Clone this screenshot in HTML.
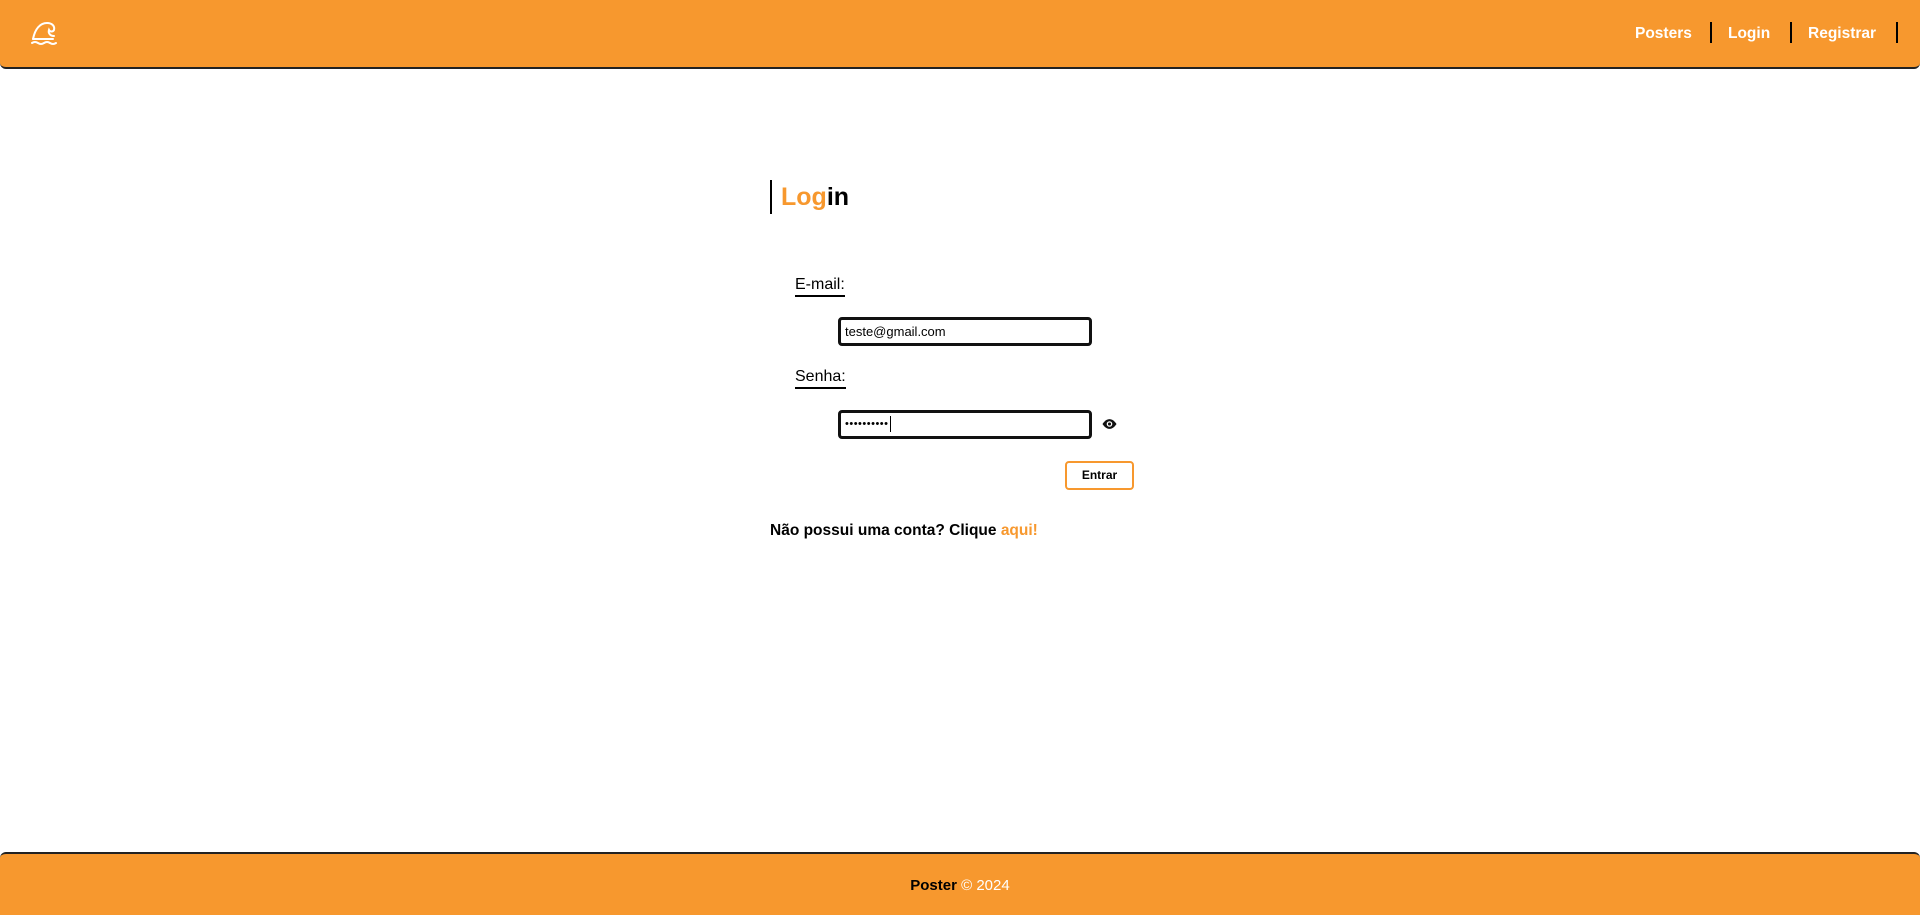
<!DOCTYPE html>
<html><head><meta charset="utf-8"><style>
*{box-sizing:border-box;margin:0;padding:0}
body{width:1920px;height:915px;position:relative;background:#fff;font-family:"Liberation Sans",Arial,sans-serif;overflow:hidden}
.hdr{position:absolute;left:0;top:0;width:1920px;height:69px;background:#f7982e;border-bottom:2px solid #222;border-radius:0 0 6px 6px}
.nav{position:absolute;top:25px;font-weight:bold;color:#fff;font-size:15.5px}
.sep{position:absolute;top:22px;width:2px;height:21px;background:#000}
.abs{position:absolute}
.ftr{position:absolute;left:0;top:852px;width:1920px;height:63px;background:#f7982e;border-top:2px solid #222;border-radius:6px 6px 0 0;text-align:center;color:#fff;font-size:15px;line-height:64px}
.lbl{position:absolute;font-size:16px;color:#000;border-bottom:2px solid #000;line-height:20px}
.inp{position:absolute;left:838px;width:254px;height:29px;border:3px solid #111;border-radius:4px;font-size:13px;line-height:23px;padding-left:4px}
</style></head><body>
<div class="hdr">
<svg class="abs" style="left:31px;top:19px" width="28" height="28" viewBox="0 0 28 28" fill="none" stroke="#fff" stroke-width="2" stroke-linecap="round">
<path d="M2 20 C4 10 9 4 16 4 C21 4 24 7 23 11 C22 13 19 13 18 11 C17 14 19 17 23 17"/>
<path d="M2 20 H22"/>
<path d="M1 24 q3 -2 6 0 t6 0 t6 0 t6 0"/>
</svg>
<div class="nav" style="left:1635px">Posters</div>
<div class="sep" style="left:1710px"></div>
<div class="nav" style="left:1728px">Login</div>
<div class="sep" style="left:1790px"></div>
<div class="nav" style="left:1808px">Registrar</div>
<div class="sep" style="left:1896px"></div>
</div>
<div class="abs" style="left:770px;top:180px;width:2px;height:34px;background:#000"></div>
<div class="abs" style="left:781px;top:183px;font-size:25px;font-weight:bold"><span style="color:#f7982e">Log</span>in</div>
<div class="lbl" style="left:795px;top:275px">E-mail:</div>
<div class="inp" style="top:317px">teste@gmail.com</div>
<div class="lbl" style="left:795px;top:367px">Senha:</div>
<div class="inp" style="top:410px;font-size:11px;letter-spacing:0.5px">••••••••••<span style="display:inline-block;width:1px;height:16px;background:#000;vertical-align:middle;margin-left:1px"></span></div>
<svg class="abs" style="left:1101px;top:417px" width="17" height="14" viewBox="0 0 24 20"><path d="M12 3C6 3 2 10 2 10s4 7 10 7 10-7 10-7-4-7-10-7z" fill="#111"/><circle cx="12" cy="10" r="4" fill="#fff"/><circle cx="12" cy="10" r="2.2" fill="#111"/></svg>
<div class="abs" style="left:1065px;top:461px;width:69px;height:29px;border:2px solid #f7982e;border-radius:4px;font-size:12px;font-weight:bold;text-align:center;line-height:25px">Entrar</div>
<div class="abs" style="left:770px;top:522px;font-size:15.5px;font-weight:bold">Não possui uma conta? Clique <span style="color:#f7982e">aqui!</span></div>
<div class="ftr"><b style="color:#000">Poster</b> © 2024</div>
</body></html>
